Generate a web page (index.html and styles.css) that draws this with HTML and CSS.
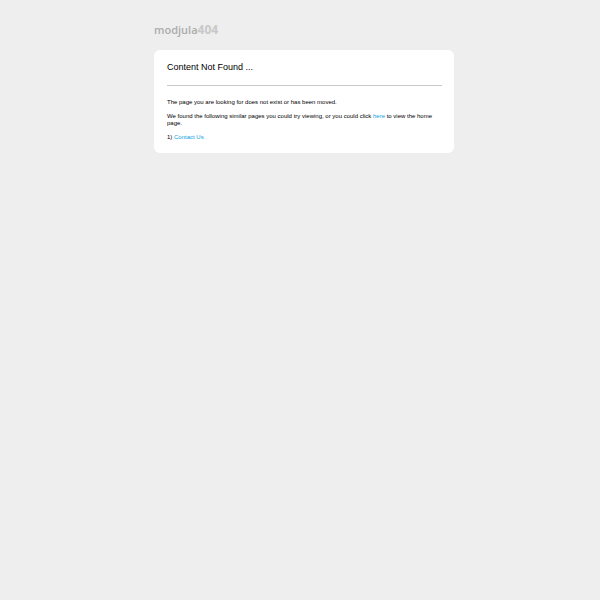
FILE: index.html
```html
<!DOCTYPE html>
<html lang="en">
  <head>
    <meta charset="UTF-8" />
    <meta name="viewport" content="width=device-width, initial-scale=1.0" />
    <title>Content Not Found</title>
    <link rel="stylesheet" href="styles.css">
  </head>

  <body>
    <div class="wrapper">
      <div class="logo">modjula<span class="logo-code">404</span></div>

      <div class="content-box">
        <h1>Content Not Found ...</h1>
        <hr />
        <p>The page you are looking for does not exist or has been moved.</p>
        <p>We found the following similar pages you could try viewing, or you could click <a href="/">here</a> to view the home page.</p>
        <p>1) <a href="/contact-us">Contact Us</a></p>
      </div>
    </div>
  </body>
</html>
```

FILE: styles.css
```css
body {
  margin: 0;
  padding: 22px 0 0 8px;
  background-color: #eeeeee;
  color: #000;
  font-family: Arial, "Liberation Sans", sans-serif;
  font-size: 6px;
  line-height: 7px;
}

.wrapper {
  max-width: 300px;
  margin: 0 auto;
}

.logo {
  margin-bottom: 12px;
  color: #acacac;
  font-family: "Open Sans", "Noto Sans", sans-serif;
  font-size: 11px;
  font-weight: 600;
  line-height: 16px;
}

.logo-code {
  color: #c8c8c8;
  font-size: 12px;
  font-weight: bold;
}

.content-box {
  padding: 12px 12px 12px 13px;
  border-radius: 6px;
  background-color: #fff;
}

h1 {
  margin: 0 0 12px;
  font-size: 9px;
  font-weight: normal;
  line-height: 11px;
}

hr {
  height: 1px;
  margin: 0 0 13px;
  border: none;
  background-color: #c8c8c8;
}

p {
  margin: 0 0 7px;
}

p:last-child {
  margin-bottom: 0;
}

a {
  color: #0d9fe0;
  text-decoration: none;
}
```
